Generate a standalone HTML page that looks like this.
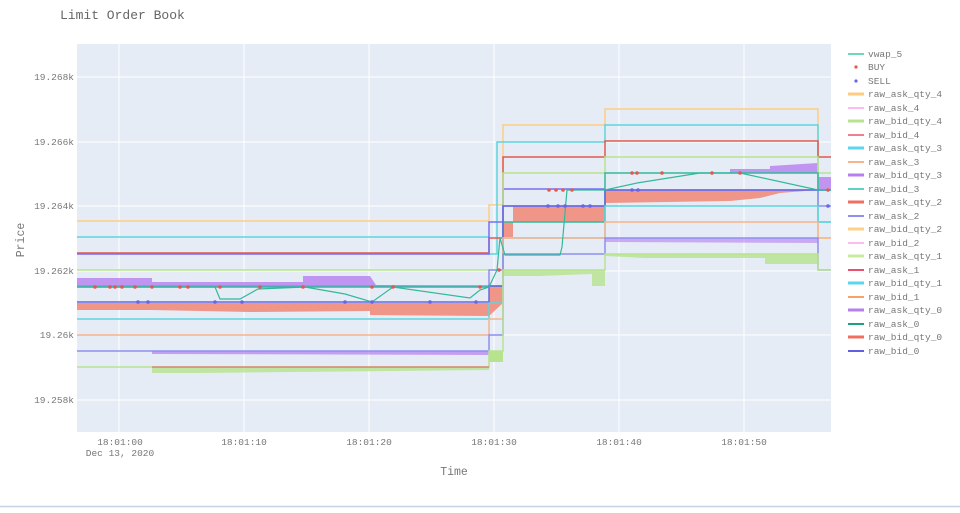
<!DOCTYPE html>
<html><head><meta charset="utf-8"><style>
body{margin:0;background:#fff;width:960px;height:508px;overflow:hidden;font-family:"Liberation Mono",monospace}
</style></head><body>
<svg width="960" height="508" xmlns="http://www.w3.org/2000/svg" font-family="Liberation Mono, monospace">
<rect x="0" y="0" width="960" height="508" fill="#fff"/>
<line x1="0" y1="506.5" x2="960" y2="506.5" stroke="#c5d3e3" stroke-width="1.5"/>
<text x="60" y="19" font-size="13" fill="#666">Limit Order Book</text>
<rect x="77" y="44" width="754" height="388" fill="#e5ecf6"/>
<g stroke="#fff" stroke-width="1">
<line x1="119" y1="44" x2="119" y2="432"/><line x1="244" y1="44" x2="244" y2="432"/><line x1="369" y1="44" x2="369" y2="432"/><line x1="494" y1="44" x2="494" y2="432"/><line x1="619" y1="44" x2="619" y2="432"/><line x1="744" y1="44" x2="744" y2="432"/>
<line x1="77" y1="77" x2="831" y2="77"/><line x1="77" y1="142" x2="831" y2="142"/><line x1="77" y1="206" x2="831" y2="206"/><line x1="77" y1="271" x2="831" y2="271"/><line x1="77" y1="335" x2="831" y2="335"/><line x1="77" y1="400" x2="831" y2="400"/>
</g>
<g font-size="9.5" fill="#777" text-anchor="end">
<text x="74" y="80">19.268k</text><text x="74" y="145">19.266k</text><text x="74" y="209">19.264k</text><text x="74" y="274">19.262k</text><text x="74" y="338">19.26k</text><text x="74" y="403">19.258k</text>
</g>
<g font-size="9.5" fill="#777" text-anchor="middle">
<text x="120" y="445">18:01:00</text><text x="244" y="445">18:01:10</text><text x="369" y="445">18:01:20</text><text x="494" y="445">18:01:30</text><text x="619" y="445">18:01:40</text><text x="744" y="445">18:01:50</text>
<text x="120" y="456">Dec 13, 2020</text>
<text x="454" y="475" font-size="11.5">Time</text>
</g>
<text x="24" y="240" font-size="11.5" fill="#777" text-anchor="middle" transform="rotate(-90 24 240)">Price</text>
<g fill="none" stroke-width="1.5">
<path d="M77 278 L152 278 L152 282 L303 282 L303 276 L370 276 L376 285 L489 286 L489 286 L77 286Z" fill="#b57ff0" fill-opacity=".8" stroke="none"/>
<path d="M77 303 L489 303 L489 316 L370 315 L370 311 L250 312 L152 310 L77 310Z" fill="#ef9688" stroke="none"/>
<path d="M489 286 L503 286 L503 303 L489 316Z" fill="#ef9688" stroke="none"/>
<path d="M513 206 L605 206 L605 222 L513 222 Z" fill="#ef9688" stroke="none"/>
<path d="M503 222 L513 222 L513 237 L503 237 Z" fill="#ef9688" stroke="none"/>
<path d="M605 190 L818 190 L780 193 L760 198 L730 201 L605 203Z" fill="#ef9688" stroke="none"/>
<path d="M730 173 L730 169 L770 169 L770 166 L818 163 L818 173Z" fill="#b57ff0" fill-opacity=".8" stroke="none"/>
<path d="M818 177 L831 177 L831 189 L818 189Z" fill="#b57ff0" fill-opacity=".8" stroke="none"/>
<path d="M605 238 L818 238 L818 243 L605 242Z" fill="#b57ff0" fill-opacity=".6" stroke="none"/>
<path d="M605 254 L818 254 L818 264 L765 264 L765 258 L645 258 L605 256Z" fill="#b7e38f" fill-opacity=".8" stroke="none"/>
<path d="M503 270 L605 270 L605 286 L592 286 L592 274 L540 276 L503 276Z" fill="#b7e38f" fill-opacity=".8" stroke="none"/>
<path d="M489 351 L503 351 L503 362 L489 362Z" fill="#b7e38f" stroke="none"/>
<path d="M152 367 L489 367 L489 370 L197 373 L152 373Z" fill="#b7e38f" fill-opacity=".8" stroke="none"/>
<path d="M152 351 L489 351 L489 355 L152 354Z" fill="#b57ff0" fill-opacity=".7" stroke="none"/>
<path d="M77 221 H489 V205 H503 V125 H605 V109 H818 V238 H831" stroke="#fecb82"/>
<path d="M77 237 H489 V254 H497 V142 H605 V125 H818 V222 H831" stroke="#5ed4de"/>
<path d="M77 253 H489 V238 H503 V157 H605 V141 H818 V157 H831" stroke="#e05a4f"/>
<path d="M77 254 H489 V222 H503 V189 H605" stroke="#7a6ff0"/>
<path d="M77 270 H489 V270 H503 V173 H605 V157 H818 V173 H831" stroke="#b7e38f"/>
<path d="M77 286 H489 V270 H503 V206 H605 V190 H818 V206 H831" stroke="#8f8ff0"/>
<path d="M77 287 H489 V286 H503 V222 H605 V173 H818 V190 H831" stroke="#33b99a"/>
<path d="M77 302 H489 V286 H503 V206 H605 V190 H831" stroke="#6666e6"/>
<path d="M77 319 H489 V303 H503 V238 H605 V206 H818 V222 H831" stroke="#5ed4de"/>
<path d="M77 335 H489 V319 H503 V238 H605 V222 H818 V238 H831" stroke="#f8b48c"/>
<path d="M77 351 H489 V335 H503 V254 H605 V238 H818 V270 H831" stroke="#8f8ff0"/>
<path d="M77 367 H489 V351 H503 V270 H605 V254 H818 V270 H831" stroke="#b7e38f"/>
<path d="M152 367 H489" stroke="#e05a4f" stroke-width="1"/>
<path d="M77 287 L215 287 L220 299 L240 299 L258 289 L305 287 L345 294 L372 302 L393 287 L470 298 L480 290 L489 287 L497 270 L500 238 L505 255 L560 255 L562 247 L567 190 L605 190 L637 183 L700 173 L740 173 L818 190 L831 190" stroke="#33b99a" stroke-width="1.2"/>
</g>
<g fill="#e05a4f">
<circle cx="95" cy="287" r="1.8"/><circle cx="110" cy="287" r="1.8"/><circle cx="115" cy="287" r="1.8"/><circle cx="122" cy="287" r="1.8"/><circle cx="135" cy="287" r="1.8"/><circle cx="152" cy="287" r="1.8"/><circle cx="180" cy="287" r="1.8"/><circle cx="188" cy="287" r="1.8"/><circle cx="220" cy="287" r="1.8"/><circle cx="260" cy="287" r="1.8"/><circle cx="303" cy="287" r="1.8"/><circle cx="372" cy="287" r="1.8"/><circle cx="393" cy="287" r="1.8"/><circle cx="480" cy="287" r="1.8"/>
<circle cx="549" cy="190" r="1.8"/><circle cx="556" cy="190" r="1.8"/><circle cx="563" cy="190" r="1.8"/><circle cx="572" cy="190" r="1.8"/><circle cx="632" cy="173" r="1.8"/><circle cx="637" cy="173" r="1.8"/><circle cx="662" cy="173" r="1.8"/><circle cx="712" cy="173" r="1.8"/><circle cx="740" cy="173" r="1.8"/><circle cx="828" cy="190" r="1.8"/><circle cx="499" cy="270" r="1.8"/>
</g>
<g fill="#6666e6">
<circle cx="138" cy="302" r="1.8"/><circle cx="148" cy="302" r="1.8"/><circle cx="215" cy="302" r="1.8"/><circle cx="242" cy="302" r="1.8"/><circle cx="345" cy="302" r="1.8"/><circle cx="372" cy="302" r="1.8"/><circle cx="430" cy="302" r="1.8"/><circle cx="476" cy="302" r="1.8"/>
<circle cx="548" cy="206" r="1.8"/><circle cx="558" cy="206" r="1.8"/><circle cx="565" cy="206" r="1.8"/><circle cx="583" cy="206" r="1.8"/><circle cx="590" cy="206" r="1.8"/><circle cx="632" cy="190" r="1.8"/><circle cx="638" cy="190" r="1.8"/><circle cx="828" cy="206" r="1.8"/>
</g>
<g font-size="9.5" fill="#777">
<g stroke-width="2">
<line x1="848" y1="54" x2="864" y2="54" stroke="#6fd8b8"/>
<line x1="848" y1="94" x2="864" y2="94" stroke="#fecb82" stroke-width="3"/>
<line x1="848" y1="108" x2="864" y2="108" stroke="#fdbcf0"/>
<line x1="848" y1="121" x2="864" y2="121" stroke="#b7e38f" stroke-width="3"/>
<line x1="848" y1="135" x2="864" y2="135" stroke="#ef7f90"/>
<line x1="848" y1="148" x2="864" y2="148" stroke="#5ed4f0" stroke-width="3"/>
<line x1="848" y1="162" x2="864" y2="162" stroke="#f8b48c"/>
<line x1="848" y1="175" x2="864" y2="175" stroke="#b57ff0" stroke-width="3"/>
<line x1="848" y1="189" x2="864" y2="189" stroke="#5ed4c0"/>
<line x1="848" y1="202" x2="864" y2="202" stroke="#ef7060" stroke-width="3"/>
<line x1="848" y1="216" x2="864" y2="216" stroke="#8f8ff0"/>
<line x1="848" y1="229" x2="864" y2="229" stroke="#fed08a" stroke-width="3"/>
<line x1="848" y1="243" x2="864" y2="243" stroke="#fdbcf0"/>
<line x1="848" y1="256" x2="864" y2="256" stroke="#c7eaa0" stroke-width="3"/>
<line x1="848" y1="270" x2="864" y2="270" stroke="#e8506e"/>
<line x1="848" y1="283" x2="864" y2="283" stroke="#5ed4f0" stroke-width="3"/>
<line x1="848" y1="297" x2="864" y2="297" stroke="#f8a070"/>
<line x1="848" y1="310" x2="864" y2="310" stroke="#b57ff0" stroke-width="3"/>
<line x1="848" y1="324" x2="864" y2="324" stroke="#20a080"/>
<line x1="848" y1="337" x2="864" y2="337" stroke="#ef7060" stroke-width="3"/>
<line x1="848" y1="351" x2="864" y2="351" stroke="#6060e0"/>
</g>
<circle cx="856" cy="67" r="1.6" fill="#e05a4f"/><circle cx="856" cy="81" r="1.6" fill="#6666e6"/>
<text x="868" y="57">vwap_5</text><text x="868" y="70">BUY</text><text x="868" y="84">SELL</text>
<text x="868" y="97">raw_ask_qty_4</text><text x="868" y="111">raw_ask_4</text><text x="868" y="124">raw_bid_qty_4</text><text x="868" y="138">raw_bid_4</text>
<text x="868" y="151">raw_ask_qty_3</text><text x="868" y="165">raw_ask_3</text><text x="868" y="178">raw_bid_qty_3</text><text x="868" y="192">raw_bid_3</text>
<text x="868" y="205">raw_ask_qty_2</text><text x="868" y="219">raw_ask_2</text><text x="868" y="232">raw_bid_qty_2</text><text x="868" y="246">raw_bid_2</text>
<text x="868" y="259">raw_ask_qty_1</text><text x="868" y="273">raw_ask_1</text><text x="868" y="286">raw_bid_qty_1</text><text x="868" y="300">raw_bid_1</text>
<text x="868" y="313">raw_ask_qty_0</text><text x="868" y="327">raw_ask_0</text><text x="868" y="340">raw_bid_qty_0</text><text x="868" y="354">raw_bid_0</text>
</g>
</svg>
</body></html>
